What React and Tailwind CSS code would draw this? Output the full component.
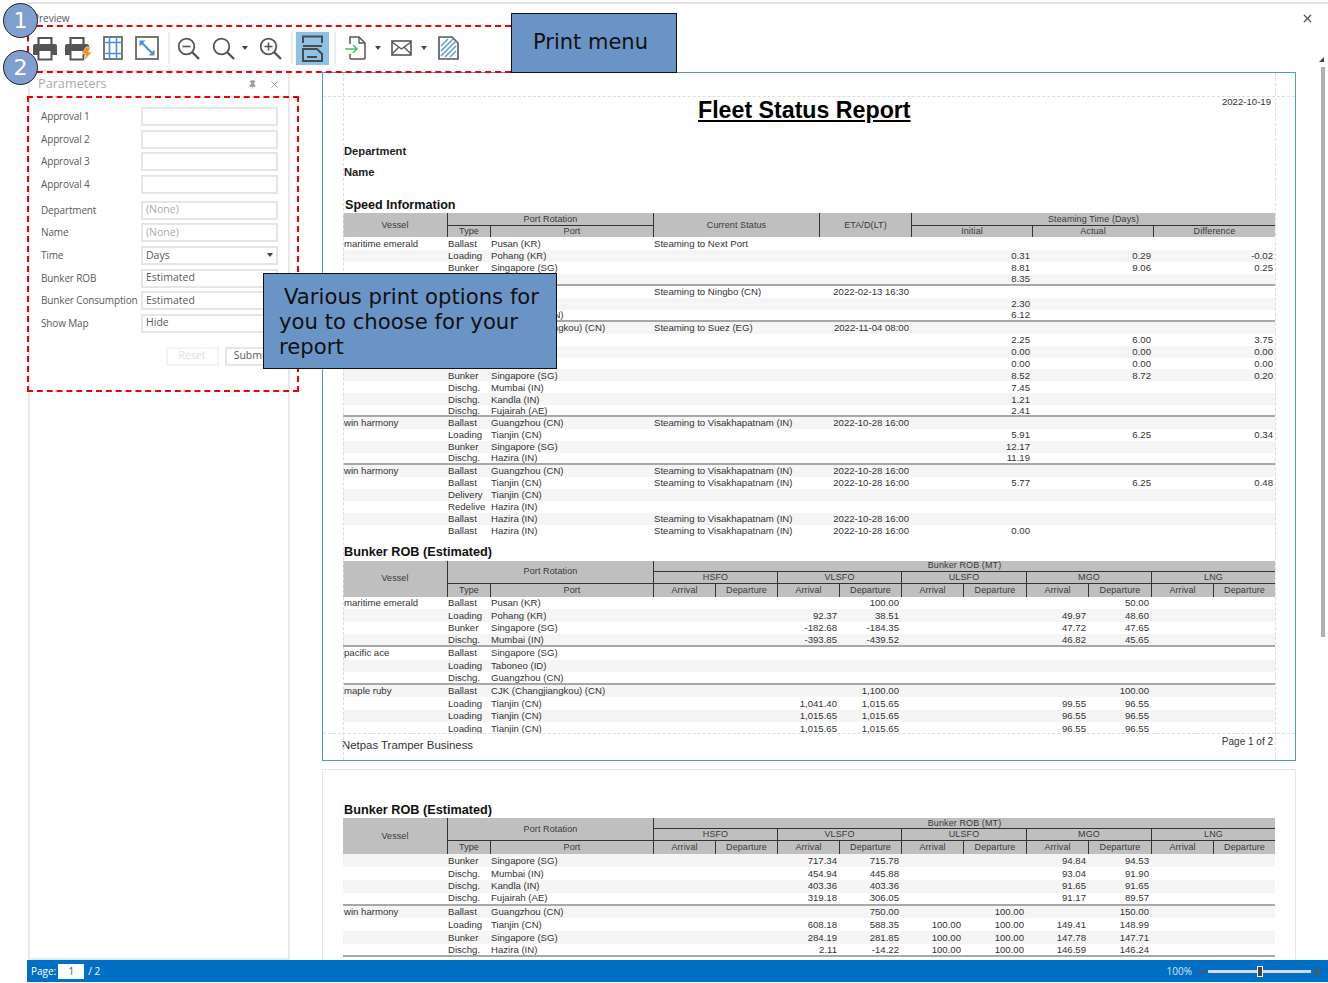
import React from 'react';
import { X, Pin } from 'lucide-react';

const INK = '#555555';

const SPEED_COLS = 'grid-cols-[104px_43px_163px_166px_92px_121px_121px_122px]';
const BUNKER_COLS = 'grid-cols-[104px_43px_163px_62px_62px_62px_62px_62px_63px_62px_63px_62px_62px]';

// [vessel, type, port, status, eta, initial, actual, difference, group end]
const speedRows = [
    ['maritime emerald', 'Ballast', 'Pusan (KR)', 'Steaming to Next Port'],
    ['', 'Loading', 'Pohang (KR)', '', '', '0.31', '0.29', '-0.02'],
    ['', 'Bunker', 'Singapore (SG)', '', '', '8.81', '9.06', '0.25'],
    ['', 'Dischg.', 'Mumbai (IN)', '', '', '8.35', '', '', true],
    ['pacific ace', 'Ballast', 'Taboneo (ID)', 'Steaming to Ningbo (CN)', '2022-02-13 16:30'],
    ['', 'Loading', 'Taboneo (ID)', '', '', '2.30'],
    ['', 'Dischg.', 'Guangzhou (CN)', '', '', '6.12', '', '', true],
    ['maple ruby', 'Ballast', 'CJK (Changjiangkou) (CN)', 'Steaming to Suez (EG)', '2022-11-04 08:00'],
    ['', 'Loading', 'Tianjin (CN)', '', '', '2.25', '6.00', '3.75'],
    ['', 'Loading', 'Tianjin (CN)', '', '', '0.00', '0.00', '0.00'],
    ['', 'Loading', 'Tianjin (CN)', '', '', '0.00', '0.00', '0.00'],
    ['', 'Bunker', 'Singapore (SG)', '', '', '8.52', '8.72', '0.20'],
    ['', 'Dischg.', 'Mumbai (IN)', '', '', '7.45'],
    ['', 'Dischg.', 'Kandla (IN)', '', '', '1.21'],
    ['', 'Dischg.', 'Fujairah (AE)', '', '', '2.41', '', '', true],
    ['win harmony', 'Ballast', 'Guangzhou (CN)', 'Steaming to Visakhapatnam (IN)', '2022-10-28 16:00'],
    ['', 'Loading', 'Tianjin (CN)', '', '', '5.91', '6.25', '0.34'],
    ['', 'Bunker', 'Singapore (SG)', '', '', '12.17'],
    ['', 'Dischg.', 'Hazira (IN)', '', '', '11.19', '', '', true],
    ['win harmony', 'Ballast', 'Guangzhou (CN)', 'Steaming to Visakhapatnam (IN)', '2022-10-28 16:00'],
    ['', 'Ballast', 'Tianjin (CN)', 'Steaming to Visakhapatnam (IN)', '2022-10-28 16:00', '5.77', '6.25', '0.48'],
    ['', 'Delivery', 'Tianjin (CN)'],
    ['', 'Redelive', 'Hazira (IN)'],
    ['', 'Ballast', 'Hazira (IN)', 'Steaming to Visakhapatnam (IN)', '2022-10-28 16:00'],
    ['', 'Ballast', 'Hazira (IN)', 'Steaming to Visakhapatnam (IN)', '2022-10-28 16:00', '0.00'],
];

// [vessel, type, port, vlsfo arr, vlsfo dep, ulsfo arr, ulsfo dep, mgo arr, mgo dep, group end]
const bunkerRows1 = [
    ['maritime emerald', 'Ballast', 'Pusan (KR)', '', '100.00', '', '', '', '50.00'],
    ['', 'Loading', 'Pohang (KR)', '92.37', '38.51', '', '', '49.97', '48.60'],
    ['', 'Bunker', 'Singapore (SG)', '-182.68', '-184.35', '', '', '47.72', '47.65'],
    ['', 'Dischg.', 'Mumbai (IN)', '-393.85', '-439.52', '', '', '46.82', '45.65', true],
    ['pacific ace', 'Ballast', 'Singapore (SG)', '', '', '', '', '', ''],
    ['', 'Loading', 'Taboneo (ID)', '', '', '', '', '', ''],
    ['', 'Dischg.', 'Guangzhou (CN)', '', '', '', '', '', '', true],
    ['maple ruby', 'Ballast', 'CJK (Changjiangkou) (CN)', '', '1,100.00', '', '', '', '100.00'],
    ['', 'Loading', 'Tianjin (CN)', '1,041.40', '1,015.65', '', '', '99.55', '96.55'],
    ['', 'Loading', 'Tianjin (CN)', '1,015.65', '1,015.65', '', '', '96.55', '96.55'],
    ['', 'Loading', 'Tianjin (CN)', '1,015.65', '1,015.65', '', '', '96.55', '96.55'],
];

const bunkerRows2 = [
    ['', 'Bunker', 'Singapore (SG)', '717.34', '715.78', '', '', '94.84', '94.53'],
    ['', 'Dischg.', 'Mumbai (IN)', '454.94', '445.88', '', '', '93.04', '91.90'],
    ['', 'Dischg.', 'Kandla (IN)', '403.36', '403.36', '', '', '91.65', '91.65'],
    ['', 'Dischg.', 'Fujairah (AE)', '319.18', '306.05', '', '', '91.17', '89.57', true],
    ['win harmony', 'Ballast', 'Guangzhou (CN)', '', '750.00', '', '100.00', '', '150.00'],
    ['', 'Loading', 'Tianjin (CN)', '608.18', '588.35', '100.00', '100.00', '149.41', '148.99'],
    ['', 'Bunker', 'Singapore (SG)', '284.19', '281.85', '100.00', '100.00', '147.78', '147.71'],
    ['', 'Dischg.', 'Hazira (IN)', '2.11', '-14.22', '100.00', '100.00', '146.59', '146.24', true],
];

const fuels = ['HSFO', 'VLSFO', 'ULSFO', 'MGO', 'LNG'];

const HeadCell = ({ className = '', children }) => (
    <div className={`flex items-center justify-center border-l border-b border-[#333] text-[9px] leading-none tracking-[0.1px] text-[#3a3a3a] ${className}`}>
        {children}
    </div>
);

const SpeedTable = () => (
    <div className="w-[932px]">
        <div className={`grid ${SPEED_COLS} grid-rows-[13px_11px] bg-[#bfbfbf]`}>
            <HeadCell className="row-span-2 !border-0">Vessel</HeadCell>
            <HeadCell className="col-span-2">Port Rotation</HeadCell>
            <HeadCell className="row-span-2 !border-b-0">Current Status</HeadCell>
            <HeadCell className="row-span-2 !border-b-0">ETA/D(LT)</HeadCell>
            <HeadCell className="col-span-3">Steaming Time (Days)</HeadCell>
            <HeadCell className="!border-b-0">Type</HeadCell>
            <HeadCell className="!border-b-0">Port</HeadCell>
            <HeadCell className="!border-b-0">Initial</HeadCell>
            <HeadCell className="!border-b-0">Actual</HeadCell>
            <HeadCell className="!border-b-0">Difference</HeadCell>
        </div>
        <div className="pt-px">
            {speedRows.map((r, i) => (
                <div
                    key={i}
                    className={`grid ${SPEED_COLS} h-[11.96px] items-center text-[9.6px] leading-none text-[#333] ${i % 2 ? 'bg-[#f5f5f5]' : ''} ${r[8] ? 'border-b-2 border-[#a8a8a8]' : ''}`}
                >
                    <div className="pl-px whitespace-nowrap">{r[0]}</div>
                    <div className="pl-px whitespace-nowrap">{r[1]}</div>
                    <div className="pl-px whitespace-nowrap">{r[2]}</div>
                    <div className="pl-px whitespace-nowrap">{r[3]}</div>
                    <div className="pr-[2px] text-right whitespace-nowrap">{r[4]}</div>
                    <div className="pr-[2px] text-right">{r[5]}</div>
                    <div className="pr-[2px] text-right">{r[6]}</div>
                    <div className="pr-[2px] text-right">{r[7]}</div>
                </div>
            ))}
        </div>
    </div>
);

const BunkerTable = ({ rows, rowHeight, firstStriped }) => (
    <div className="w-[932px]">
        <div className={`grid ${BUNKER_COLS} grid-rows-[11px_12px_13px] bg-[#bfbfbf]`}>
            <HeadCell className="row-span-3 !border-0">Vessel</HeadCell>
            <HeadCell className="col-span-2 row-span-2">Port Rotation</HeadCell>
            <HeadCell className="col-span-10">Bunker ROB (MT)</HeadCell>
            {fuels.map(f => (
                <HeadCell key={f} className="col-span-2">{f}</HeadCell>
            ))}
            <HeadCell className="!border-b-0">Type</HeadCell>
            <HeadCell className="!border-b-0">Port</HeadCell>
            {fuels.map(f => (
                <React.Fragment key={f}>
                    <HeadCell className="!border-b-0">Arrival</HeadCell>
                    <HeadCell className="!border-b-0">Departure</HeadCell>
                </React.Fragment>
            ))}
        </div>
        {rows.map((r, i) => (
            <div
                key={i}
                style={{ height: rowHeight }}
                className={`grid ${BUNKER_COLS} items-center text-[9.6px] leading-none text-[#333] ${(i % 2 === 0) === firstStriped ? 'bg-[#f5f5f5]' : ''} ${r[9] ? 'border-b-2 border-[#a8a8a8]' : ''}`}
            >
                <div className="pl-px whitespace-nowrap">{r[0]}</div>
                <div className="pl-px whitespace-nowrap">{r[1]}</div>
                <div className="pl-px whitespace-nowrap">{r[2]}</div>
                <div />
                <div />
                <div className="pr-[2px] text-right">{r[3]}</div>
                <div className="pr-[2px] text-right">{r[4]}</div>
                <div className="pr-[2px] text-right">{r[5]}</div>
                <div className="pr-[2px] text-right">{r[6]}</div>
                <div className="pr-[2px] text-right">{r[7]}</div>
                <div className="pr-[2px] text-right">{r[8]}</div>
            </div>
        ))}
    </div>
);

const Caret = ({ className = '' }) => (
    <svg width="6" height="4" viewBox="0 0 6 4" className={`shrink-0 ${className}`}>
        <path d="M0 0h6L3 4z" fill="#444" />
    </svg>
);

const Sep = ({ className = '' }) => <div className={`h-[32px] w-[2px] shrink-0 bg-[#ececec] ${className}`} />;

const PrintIcon = ({ bolt }) => (
    <svg width={bolt ? 27 : 24} height="25" viewBox={bolt ? '0 0 27 25' : '0 0 24 25'} className="shrink-0">
        <path d="M5.5 9V2h13v7" fill="none" stroke={INK} strokeWidth="2.2" />
        <path d="M2 8h20a2 2 0 0 1 2 2v9H0v-9a2 2 0 0 1 2-2z" fill={INK} />
        <rect x="5.5" y="14" width="13" height="9.5" fill="#fff" stroke={INK} strokeWidth="2" />
        {bolt && <path d="M21 11h5l-3 5h4l-8 9 2-7h-4z" fill="#f58a1f" stroke="#fff" strokeWidth="0.6" />}
    </svg>
);

const GridIcon = () => (
    <svg width="20" height="24" viewBox="0 0 20 24" className="shrink-0">
        <rect x="1" y="1" width="18" height="22" fill="#fff" stroke={INK} strokeWidth="1.6" />
        <path d="M6.5 1v22M13.5 1v22M1 6.5h18M1 17.5h18" stroke="#4f8fcf" strokeWidth="1.6" fill="none" />
    </svg>
);

const FitIcon = () => (
    <svg width="24" height="24" viewBox="0 0 24 24" className="shrink-0">
        <rect x="1" y="1" width="22" height="22" fill="#fff" stroke={INK} strokeWidth="1.6" />
        <path d="M6 6l12 12" stroke="#4f8fcf" strokeWidth="2" />
        <path d="M4.5 4.5h6l-6 6zM19.5 19.5h-6l6-6z" fill="#4f8fcf" />
    </svg>
);

const ZoomIcon = ({ sign }) => (
    <svg width="23" height="23" viewBox="0 0 23 23" className="shrink-0">
        <circle cx="9.5" cy="9.5" r="7.8" fill="none" stroke={INK} strokeWidth="1.8" />
        <path d="M15 15l7 7" stroke={INK} strokeWidth="2.4" />
        {sign && <path d="M5.5 9.5h8" stroke={INK} strokeWidth="1.6" />}
        {sign === 'plus' && <path d="M9.5 5.5v8" stroke={INK} strokeWidth="1.6" />}
    </svg>
);

const PagesIcon = () => (
    <svg width="33" height="33" viewBox="0 0 33 33" className="shrink-0">
        <path d="M7 11V4.5h19V11M7 14h19" fill="none" stroke="#4a4a4a" strokeWidth="2" />
        <path d="M7 29V17h14l5 5v7zM11 25h10" fill="none" stroke="#4a4a4a" strokeWidth="2" />
    </svg>
);

const ExportIcon = () => (
    <svg width="21" height="24" viewBox="0 0 21 24" className="shrink-0">
        <path d="M5 8V1h9l6 6v15a1 1 0 0 1-1 1H6a1 1 0 0 1-1-1v-4" fill="#fff" stroke={INK} strokeWidth="1.5" />
        <path d="M14 1v6h6" fill="none" stroke={INK} strokeWidth="1.3" />
        <path d="M0 13h11M8 9l4 4-4 4" fill="none" stroke="#5cb86c" strokeWidth="1.6" />
    </svg>
);

const MailIcon = () => (
    <svg width="21" height="16" viewBox="0 0 21 16" className="shrink-0">
        <rect x="1" y="1" width="19" height="14" fill="#fff" stroke={INK} strokeWidth="1.6" />
        <path d="M1 2l9.5 7L20 2M1 14l7-7M20 14l-7-7" fill="none" stroke={INK} strokeWidth="1.4" />
    </svg>
);

const WatermarkIcon = () => (
    <svg width="21" height="24" viewBox="0 0 21 24" className="shrink-0">
        <path d="M1 1h13l6 6v16H1z" fill="#fff" stroke={INK} strokeWidth="1.6" />
        <path d="M3 10l7-7M3 15l12-12M3 20l15-15M7 21l11-11M12 21l6-6" stroke="#5a9bd8" strokeWidth="1.5" />
    </svg>
);

const Toolbar = () => (
    <div className="flex h-[38px] shrink-0 items-center">
        <div className="ml-[6px]"><PrintIcon /></div>
        <div className="ml-[8px]"><PrintIcon bolt /></div>
        <div className="ml-[11px]"><GridIcon /></div>
        <div className="ml-[12px]"><FitIcon /></div>
        <Sep className="ml-[9px]" />
        <div className="ml-[7px]"><ZoomIcon sign="minus" /></div>
        <div className="ml-[12px]"><ZoomIcon /></div>
        <Caret className="ml-[7px]" />
        <div className="ml-[11px]"><ZoomIcon sign="plus" /></div>
        <Sep className="ml-[9px]" />
        <div className="ml-[3px] bg-[#8fc1e6]"><PagesIcon /></div>
        <Sep className="ml-[5px]" />
        <div className="ml-[9px]"><ExportIcon /></div>
        <Caret className="ml-[9px]" />
        <div className="ml-[10px]"><MailIcon /></div>
        <Caret className="ml-[9px]" />
        <div className="ml-[11px]"><WatermarkIcon /></div>
    </div>
);

const FieldRow = ({ label, value, muted, caret }) => (
    <div className="flex h-[19px] items-center">
        <div className="w-[100px] shrink-0 whitespace-nowrap text-[10px] tracking-[-0.15px] text-[#5a5a5a]">{label}</div>
        <div className={`flex h-[19px] w-[137px] items-center justify-between border-2 border-[#e6e6e6] pl-[3px] pr-[3px] text-[10.5px] ${muted ? 'text-[#aaa]' : 'text-[#5a5a5a]'}`}>
            <span>{value}</span>
            {caret && <Caret />}
        </div>
    </div>
);

const ParametersPanel = () => (
    <div className="ml-px flex h-[890px] w-[262px] shrink-0 flex-col self-end border-2 border-[#e8e8e8] font-['Open_Sans',sans-serif]">
        <div className="flex h-[24px] shrink-0 items-center justify-between pl-[8px] pr-[8px]">
            <span className="text-[12.7px] text-[#aaaaaa]">Parameters</span>
            <div className="flex items-center gap-[12px] text-[#9a9a9a]">
                <Pin size={9} fill="currentColor" />
                <X size={11} />
            </div>
        </div>
        <div className="flex flex-col pl-[11px] pt-[11px]">
            <div className="flex flex-col gap-[3.6px]">
                <FieldRow label="Approval 1" />
                <FieldRow label="Approval 2" />
                <FieldRow label="Approval 3" />
                <FieldRow label="Approval 4" />
            </div>
            <div className="mt-[7px] flex flex-col gap-[3.6px]">
                <FieldRow label="Department" value="(None)" muted />
                <FieldRow label="Name" value="(None)" muted />
                <FieldRow label="Time" value="Days" caret />
                <FieldRow label="Bunker ROB" value="Estimated" />
                <FieldRow label="Bunker Consumption" value="Estimated" />
                <FieldRow label="Show Map" value="Hide" />
            </div>
            <div className="mt-[14px] flex pl-[124.5px] text-[10.5px]">
                <div className="flex h-[19px] w-[53px] items-center justify-center border-2 border-[#f4f4f4] text-[#e0e0e0]">Reset</div>
                <div className="ml-[6px] flex h-[19px] w-[53px] items-center justify-center border-2 border-[#e6e6e6] text-[#5a5a5a]">Submit</div>
            </div>
        </div>
    </div>
);

const PageOne = () => (
    <div className="relative h-[689px] w-[974px] shrink-0 border border-[#4a9ad8] pl-[20px]">
        <div className="absolute left-[20px] top-0 h-full border-l border-dashed border-[#dcdcdc]" />
        <div className="absolute left-[952px] top-0 h-full border-l border-dashed border-[#dcdcdc]" />
        <div className="absolute left-0 top-[23px] w-full border-t border-dashed border-[#dcdcdc]" />
        <div className="absolute left-0 top-[660px] w-full border-t border-dashed border-[#dcdcdc]" />

        <div className="relative h-[60px] w-[932px] pt-[22px]">
            <h1 className="pl-[355px] text-[23.2px] font-bold leading-[30px] text-black underline">Fleet Status Report</h1>
            <div className="absolute right-[4px] top-[22px] text-[9.6px] text-[#333]">2022-10-19</div>
        </div>
        <div className="mt-[8px] pl-px text-[11.2px] font-bold leading-[21px] text-[#222]">Department</div>
        <div className="pl-px text-[11.2px] font-bold leading-[21px] text-[#222]">Name</div>
        <div className="mt-[12px] h-[18px] pl-[2px] text-[12.6px] font-bold leading-[20px] text-[#111]">Speed Information</div>
        <SpeedTable />
        <div className="mt-[7px] h-[17px] pl-px text-[12.7px] font-bold leading-[16px] text-[#111]">Bunker ROB (Estimated)</div>
        <BunkerTable rows={bunkerRows1} rowHeight={12.55} firstStriped={false} />
        <div className="mt-[2px] flex w-[930px] items-start justify-between">
            <span className="-ml-px text-[11.4px] leading-[16px] text-[#333]">Netpas Tramper Business</span>
            <span className="text-[10px] leading-[10px] text-[#333]">Page 1 of 2</span>
        </div>
    </div>
);

const PageTwo = () => (
    <div className="mt-[8px] w-[974px] shrink-0 border border-[#e4e4e4] pb-[20px] pl-[20px] pt-[32px]">
        <div className="h-[16px] pl-px text-[12.7px] font-bold leading-[16px] text-[#111]">Bunker ROB (Estimated)</div>
        <BunkerTable rows={bunkerRows2} rowHeight={12.9} firstStriped />
    </div>
);

const StatusBar = () => (
    <div className="flex h-[22px] shrink-0 items-center justify-between bg-[#0070c6] pl-[4px] pt-px font-['Open_Sans',sans-serif] text-[10px]">
        <div className="flex items-center text-white">
            <span>Page:</span>
            <div className="ml-[2px] flex h-[15px] w-[26px] items-center justify-center bg-white text-[#555]">1</div>
            <span className="ml-[4px]">/ 2</span>
        </div>
        <div className="flex items-center pr-[7px]">
            <span className="text-[#d8e4f0]">100%</span>
            <div className="ml-[6px] h-[2px] w-[7px] bg-[#555]" />
            <div className="relative ml-[3px] h-[3px] w-[103px] bg-[#d8d8d8]">
                <div className="absolute left-[49px] top-[-4px] h-[11px] w-[6px] border border-white bg-[#444]" />
            </div>
            <div className="relative ml-[2px] h-[8px] w-[8px]">
                <div className="absolute left-0 top-[3px] h-[2px] w-[8px] bg-[#555]" />
                <div className="absolute left-[3px] top-0 h-[8px] w-[2px] bg-[#555]" />
            </div>
        </div>
    </div>
);

const Annotations = () => (
    <>
        <div className="absolute left-[27px] top-[25px] h-[48px] w-[484px] border-2 border-r-0 border-dashed border-[#f00000]" />
        <div className="absolute left-[27px] top-[96px] h-[296px] w-[272px] border-2 border-dashed border-[#f00000]" />
        <div className="absolute left-[3px] top-[3px] flex h-[35px] w-[35px] items-center justify-center rounded-full border border-[#222] bg-[#7f9fcf] font-['DejaVu_Sans',sans-serif] text-[22px] text-white">1</div>
        <div className="absolute left-[3px] top-[50px] flex h-[35px] w-[35px] items-center justify-center rounded-full border border-[#222] bg-[#7f9fcf] font-['DejaVu_Sans',sans-serif] text-[22px] text-white">2</div>
        <div className="absolute left-[511px] top-[13px] flex h-[60px] w-[166px] items-center border border-[#111] bg-[#6b94c6] pl-[21px] font-['DejaVu_Sans',sans-serif] text-[21px] text-[#111]">Print menu</div>
        <div className="absolute left-[263px] top-[273px] h-[96px] w-[294px] border border-[#111] bg-[#6b94c6] pl-[15px] pt-[10px] font-['DejaVu_Sans',sans-serif] text-[21.2px] leading-[25px] text-[#111]">
            <div className="pl-[5px]">Various print options for</div>
            <div>you to choose for your</div>
            <div>report</div>
        </div>
    </>
);

const App = () => {
    return (
        <div className="relative h-[983px] w-[1328px] overflow-hidden bg-white font-['Liberation_Sans',sans-serif]">
            <div className="flex h-full flex-col pb-px pl-[27px] pt-[2px]">
                <div className="flex h-[27px] shrink-0 items-center justify-between border-t-2 border-[#e4e4e4] pl-[6px] pr-[14px] pt-[3px] font-['Open_Sans',sans-serif] text-[10px] text-[#555]">
                    <span>Preview</span>
                    <X size={13} strokeWidth={2.4} className="text-[#555]" />
                </div>
                <Toolbar />
                <div className="flex min-h-0 flex-1">
                    <ParametersPanel />
                    <div className="ml-[32px] flex flex-1 flex-col overflow-hidden pt-[5px]">
                        <PageOne />
                        <PageTwo />
                    </div>
                </div>
                <StatusBar />
            </div>
            {/* scrollbar sits on top of the preview pane */}
            <div className="absolute left-[1319px] top-[57px] border-b-[5px] border-l-[5px] border-b-[#444] border-l-transparent" />
            <div className="absolute left-[1321px] top-[67px] h-[570px] w-[4px] bg-[#b0b0b0]" />
            <Annotations />
        </div>
    );
};

export default App;
